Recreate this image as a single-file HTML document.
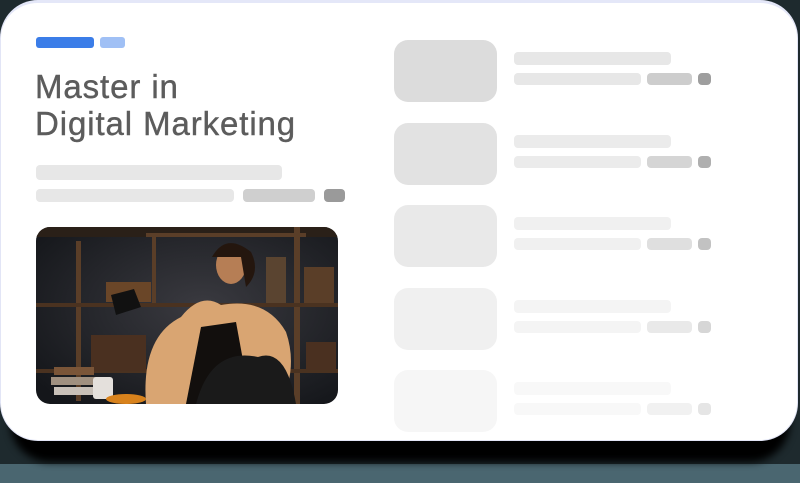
<!DOCTYPE html>
<html><head><meta charset="utf-8"><style>
html,body{margin:0;padding:0}
body{width:800px;height:483px;position:relative;overflow:hidden;background:#4a6670;font-family:"Liberation Sans",sans-serif}
.top{position:absolute;left:0;top:0;width:800px;height:464px;background:#1e2a2e}
.shadow{position:absolute;left:10px;top:400px;width:780px;height:62px;background:#000;border-radius:0 0 40px 40px;filter:blur(4px)}
.card{position:absolute;left:0;top:0;width:798px;height:441px;background:#fff;border-radius:38px;border:1px solid #e2e5f6;border-top:3px solid #e4e7f8;box-sizing:border-box}
.b{position:absolute;border-radius:4px}
h1{position:absolute;left:35px;top:68px;margin:0;font-weight:normal;font-size:33px;line-height:37px;color:#5c5c5c;letter-spacing:0.9px;-webkit-text-stroke:0.4px #5c5c5c}
.photo{position:absolute;left:36px;top:227px;width:302px;height:177px;border-radius:14px;overflow:hidden}
</style></head><body>
<div class="top"></div>
<div class="shadow"></div>
<div class="card"></div>
<div class="b" style="left:36px;top:37px;width:58px;height:11px;background:#3b7de8;border-radius:3px"></div>
<div class="b" style="left:100px;top:37px;width:25px;height:11px;background:#a0c0f5;border-radius:3px"></div>
<h1>Master in<br>Digital Marketing</h1>
<div class="b" style="left:36px;top:165px;width:246px;height:15px;background:#e7e7e7"></div>
<div class="b" style="left:36px;top:189px;width:198px;height:13px;background:#e7e7e7"></div>
<div class="b" style="left:243px;top:189px;width:72px;height:13px;background:#cfcfcf"></div>
<div class="b" style="left:324px;top:189px;width:21px;height:13px;background:#9a9a9a"></div>
<div class="photo"><svg width="302" height="177" viewBox="0 0 302 177">
<defs><radialGradient id="g" cx="0.55" cy="0.45" r="0.7"><stop offset="0" stop-color="#3a3a40"/><stop offset="1" stop-color="#14161a"/></radialGradient></defs>
<rect width="302" height="177" fill="url(#g)"/>
<rect x="0" y="0" width="302" height="10" fill="#2a2018"/>
<rect x="40" y="14" width="5" height="160" fill="#5a3e28"/>
<rect x="116" y="10" width="4" height="70" fill="#5a3e28"/>
<rect x="258" y="0" width="6" height="177" fill="#5a3e28"/>
<rect x="0" y="76" width="302" height="4" fill="#4a3220"/>
<rect x="0" y="142" width="302" height="4" fill="#4a3220"/>
<rect x="110" y="6" width="160" height="4" fill="#5a3e28"/>
<rect x="70" y="55" width="45" height="20" fill="#6a4628"/>
<rect x="268" y="40" width="30" height="36" fill="#5a3e28"/>
<rect x="230" y="30" width="20" height="46" fill="#5a4430"/>
<rect x="55" y="108" width="55" height="36" fill="#4a3020"/>
<rect x="270" y="115" width="30" height="28" fill="#4a3020"/>
<polygon points="75,68 98,62 105,80 80,88" fill="#111"/>
<path d="M110 177 Q105 110 145 90 Q165 65 185 78 Q230 70 250 105 Q262 140 245 177Z" fill="#d9a572"/>
<path d="M150 177 L165 100 L200 95 L215 177Z" fill="#120f0d"/>
<ellipse cx="195" cy="38" rx="15" ry="19" fill="#b67e55"/>
<path d="M176 30 Q190 5 215 25 Q225 45 210 60 L205 30Z" fill="#24160e"/>
<path d="M160 177 Q175 120 222 130 Q250 120 260 177Z" fill="#1a1a1a"/>
<rect x="18" y="140" width="40" height="8" fill="#7a5538"/>
<rect x="15" y="150" width="45" height="8" fill="#a09080"/>
<rect x="18" y="160" width="50" height="8" fill="#c8c0b8"/>
<rect x="57" y="150" width="20" height="22" rx="3" fill="#e4e0dc"/>
<ellipse cx="90" cy="172" rx="20" ry="5" fill="#d8821c"/>
</svg></div>
<div id="list"></div>
<script>
var ops=[1,.82,.62,.42,.26],h='';
for(var i=0;i<5;i++){var y=40+i*82.5;
h+='<div style="position:absolute;left:0;top:0;opacity:'+ops[i]+'">'+
'<div class="b" style="left:394px;top:'+y+'px;width:103px;height:62px;border-radius:14px;background:#dcdcdc"></div>'+
'<div class="b" style="left:514px;top:'+(y+12)+'px;width:157px;height:13px;background:#e7e7e7"></div>'+
'<div class="b" style="left:514px;top:'+(y+33)+'px;width:127px;height:12px;background:#e7e7e7"></div>'+
'<div class="b" style="left:647px;top:'+(y+33)+'px;width:45px;height:12px;background:#cdcdcd"></div>'+
'<div class="b" style="left:698px;top:'+(y+33)+'px;width:13px;height:12px;background:#9e9e9e"></div></div>';}
document.getElementById('list').innerHTML=h;
</script>
</body></html>
